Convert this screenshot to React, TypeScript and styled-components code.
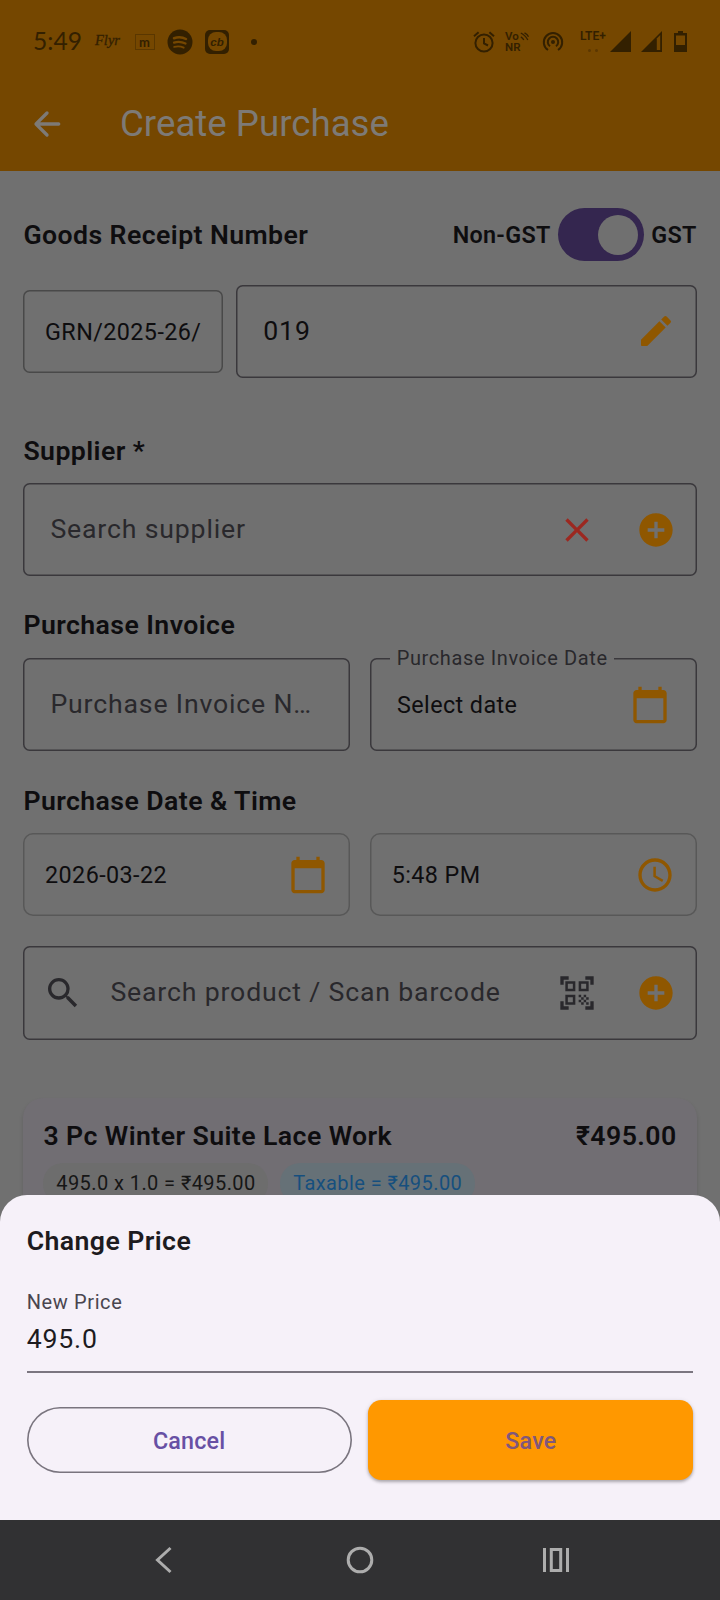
import React from "react";
import styled, { createGlobalStyle } from "styled-components";
import {
  MdAccessTime,
  MdAddCircle,
  MdCalendarToday,
  MdClose,
  MdQrCodeScanner,
  MdSearch,
} from "react-icons/md";

const c = {
  page: "#707070",
  bar: "#754700",
  barText: "#7d7a76",
  status: "#332000",
  text: "#0e0d0f",
  hint: "#29282c",
  outline: "#3a383c",
  orange: "#8f5700",
  red: "#9c2820",
  sheet: "#f6f1f9",
  purple: "#6750a4",
};

const Global = createGlobalStyle`
  * { box-sizing: border-box; }
  body { margin: 0; background: ${c.page}; font-family: Roboto, "Noto Sans", sans-serif; }
  svg { display: block; flex: none; }
  button { font: inherit; border: 0; background: none; padding: 0; }
`;

const Screen = styled.div`
  position: relative;
  width: 720px;
  height: 1600px;
  display: flex;
  flex-direction: column;
  overflow: hidden;
`;

const Header = styled.header`
  flex: none;
  height: 171px;
  background: ${c.bar};
`;

const StatusBar = styled.div`
  height: 83px;
  padding: 0 33px 0 33px;
  display: flex;
  align-items: center;
  justify-content: space-between;
  color: ${c.status};
`;

const StatusGroup = styled.div`
  display: flex;
  align-items: center;
`;

const Slot = styled.span<{ $ml: number }>`
  display: flex;
  margin-left: ${(p) => p.$ml}px;
`;

const Clock = styled.span`
  width: 50px;
  padding-bottom: 1px;
  font: 400 24.6px/30px Lato, sans-serif;
  white-space: nowrap;
`;

const Flyr = styled.span`
  margin-left: 12px;
  width: 26px;
  padding-bottom: 3px;
  font: italic 400 14.5px/20px "Liberation Serif", serif;
  -webkit-text-stroke: 0.3px ${c.status};
  white-space: nowrap;
`;

const MBox = styled.span`
  margin-left: 13.5px;
  width: 20px;
  height: 16px;
  border: 1px solid #5a3700;
  display: flex;
  align-items: center;
  justify-content: center;
  font: 700 13px/14px Lato, sans-serif;
`;

const CbBox = styled.span`
  margin-left: 12px;
  width: 24px;
  height: 24px;
  padding: 2.5px;
  border-radius: 5px;
  background: ${c.status};
`;

const CbInner = styled.span`
  display: flex;
  align-items: center;
  justify-content: center;
  width: 19px;
  height: 19px;
  border-radius: 8px;
  background: ${c.bar};
  font: italic 700 11.5px/14px "Liberation Sans", sans-serif;
`;

const Dot = styled.span`
  margin-left: 21.5px;
  width: 6px;
  height: 6px;
  border-radius: 50%;
  background: ${c.status};
`;

const Stack = styled.span<{ $ml: number; $w: number; $size: number }>`
  margin-left: ${(p) => p.$ml}px;
  width: ${(p) => p.$w}px;
  height: 22px;
  display: flex;
  flex-direction: column;
  font: 600 ${(p) => p.$size}px/11px Roboto, sans-serif;
  white-space: nowrap;
`;

const StackLine = styled.span`
  display: flex;
  align-items: center;
  gap: 1px;
`;

const FaintDots = styled.span`
  display: flex;
  gap: 4px;
  padding: 7px 0 0 8px;
  i {
    width: 3px;
    height: 3px;
    border-radius: 50%;
    background: #5c3700;
  }
`;

const AppBar = styled.div`
  height: 82px;
  padding-left: 27px;
  display: flex;
  align-items: center;
  color: ${c.barText};
`;

const AppTitle = styled.h1`
  margin: 0 0 0 53px;
  font-size: 36.67px;
  line-height: 46px;
  font-weight: 400;
  white-space: nowrap;
`;

const Form = styled.main`
  flex: 1;
  min-height: 0;
  overflow: hidden;
  padding: 37px 23.4px 0;
  color: ${c.text};
`;

const Row = styled.div<{ $gap?: number; $mt?: number; $between?: boolean }>`
  display: flex;
  align-items: center;
  gap: ${(p) => p.$gap ?? 0}px;
  margin-top: ${(p) => p.$mt ?? 0}px;
  justify-content: ${(p) => (p.$between ? "space-between" : "flex-start")};
`;

const SectionTitle = styled.h2<{ $mt?: number; $mb?: number }>`
  margin: ${(p) => p.$mt ?? 0}px 0 ${(p) => p.$mb ?? 0}px;
  font-size: 26.67px;
  line-height: 30px;
  font-weight: 600;
  letter-spacing: 0.42px;
  white-space: nowrap;
`;

const ToggleLabel = styled.span`
  font-size: 23.33px;
  line-height: 28px;
  font-weight: 600;
  letter-spacing: 0.3px;
`;

const Toggle = styled.span`
  width: 86.67px;
  height: 53.33px;
  border-radius: 27px;
  padding-right: 6.67px;
  display: flex;
  align-items: center;
  justify-content: flex-end;
  background: #34264f;
  &::after {
    content: "";
    width: 40px;
    height: 40px;
    border-radius: 50%;
    background: ${c.page};
  }
`;

const Field = styled.div<{ $w?: number; $tall?: boolean; $line?: string; $pl?: number; $r?: number }>`
  position: relative;
  ${(p) => (p.$w ? `flex: none; width: ${p.$w}px;` : "flex: 1; min-width: 0;")}
  height: ${(p) => (p.$tall === false ? 83.33 : 93.33)}px;
  padding-left: ${(p) => p.$pl ?? 27}px;
  border-radius: ${(p) => p.$r ?? 6.67}px;
  box-shadow: inset 0 0 0 1.5px ${(p) => p.$line ?? c.outline};
  display: flex;
  align-items: center;
`;

const Value = styled.span<{ $small?: boolean; $hint?: boolean }>`
  flex: 1;
  min-width: 0;
  padding: ${(p) => (p.$small ? "1px 0 0" : p.$hint ? "0 0 2px" : "0")};
  white-space: nowrap;
  font-size: ${(p) => (p.$small ? 23.33 : 26.67)}px;
  line-height: 34px;
  letter-spacing: ${(p) => (p.$small ? 0.42 : 0.83)}px;
  color: ${(p) => (p.$hint ? c.hint : c.text)};
`;

const IconSlot = styled.span<{ $w?: number; $pr?: number; $color?: string }>`
  flex: none;
  width: ${(p) => p.$w ?? 80}px;
  padding-right: ${(p) => p.$pr ?? 0}px;
  display: flex;
  justify-content: center;
  color: ${(p) => p.$color ?? c.orange};
`;

const FloatLabel = styled.span`
  position: absolute;
  left: 20px;
  top: -11.5px;
  padding: 0 6.67px;
  background: ${c.page};
  font-size: 20px;
  line-height: 24px;
  letter-spacing: 0.62px;
  color: ${c.hint};
  white-space: nowrap;
`;

const ItemCard = styled.section`
  margin-top: 58px;
  height: 260px;
  padding: 23px 20px 0;
  border-radius: 20px;
  background: #716e73;
  box-shadow: 0 3px 4px rgba(0, 0, 0, 0.14);
`;

const Chip = styled.span<{ $blue?: boolean }>`
  height: 41px;
  padding: 0 12.6px 0 12.9px;
  border-radius: 20px;
  background: ${(p) => (p.$blue ? "#667177" : "#6d6d6d")};
  color: ${(p) => (p.$blue ? "#164f7e" : "#161616")};
  font-size: 20px;
  line-height: 41px;
  letter-spacing: 0.42px;
  white-space: nowrap;
`;

const Sheet = styled.section`
  position: absolute;
  left: 0;
  right: 0;
  bottom: 80px;
  height: 325px;
  padding: 31px 26.67px 0;
  border-radius: 27px 27px 0 0;
  background: ${c.sheet};
  color: #1d1b20;
`;

const PriceField = styled.div`
  margin-top: 34px;
  height: 83px;
  border-bottom: 2px solid #7b7680;
`;

const PriceLabel = styled.div`
  font-size: 20px;
  line-height: 24px;
  letter-spacing: 0.62px;
  color: #49454f;
`;

const PriceValue = styled.div`
  margin-top: 9px;
  font-size: 26.67px;
  line-height: 32px;
  letter-spacing: 0.83px;
`;

const ActionButton = styled.button<{ $primary?: boolean }>`
  && {
    flex: 1;
    height: ${(p) => (p.$primary ? 80 : 66.67)}px;
    padding-top: 2.5px;
    border-radius: ${(p) => (p.$primary ? 13.33 : 34)}px;
    background: ${(p) => (p.$primary ? "#ff9800" : "transparent")};
    box-shadow: ${(p) =>
      p.$primary
        ? "0 2px 3px rgba(0,0,0,.24), 0 1px 5px rgba(0,0,0,.12)"
        : "inset 0 0 0 1.6px #79747e"};
    color: ${(p) => (p.$primary ? "#80577c" : c.purple)};
    font-size: 23.33px;
    line-height: 33px;
    font-weight: 500;
    letter-spacing: 0.17px;
  }
`;

const NavBar = styled.nav`
  flex: none;
  height: 80px;
  display: flex;
  align-items: center;
  justify-content: space-between;
  padding: 0 144px;
  background: #313133;
`;

const NavIcon = ({ children }: { children: React.ReactNode }) => (
  <svg width="40" height="40" viewBox="0 0 40 40" fill="none" stroke="#adadad" strokeWidth="3">
    {children}
  </svg>
);

const BackArrow = () => (
  <svg width="40" height="40" viewBox="0 0 24 24" fill="currentColor">
    <path d="M19 11H7.830l4.880-4.880c.39-.39.39-1.030 0-1.420a.996.996 0 0 0-1.410 0l-6.590 6.590a.996.996 0 0 0 0 1.410l6.590 6.590a.996.996 0 1 0 1.410-1.410L7.830 13H19c.55 0 1-.45 1-1s-.45-1-1-1z" />
  </svg>
);

const Pencil = () => (
  <svg width="40" height="40" viewBox="0 0 24 24" fill="currentColor">
    <path d="M3 17.460v3.040c0 .28.22.5.5.5h3.040c.13 0 .26-.05.35-.15L17.810 9.940l-3.750-3.750L3.150 17.100c-.1.1-.15.22-.15.36zM20.710 7.040a.996.996 0 0 0 0-1.410l-2.340-2.340a.996.996 0 0 0-1.410 0l-1.830 1.830 3.750 3.750 1.830-1.830z" />
  </svg>
);

export default function App() {
  return (
    <>
      <Global />
      <Screen>
        <Header>
          <StatusBar>
            <StatusGroup>
              <Clock>5:49</Clock>
              <Flyr>Flyr</Flyr>
              <MBox>m</MBox>
              <Slot $ml={12.5}>
                <svg width="26" height="26" viewBox="0 0 26 26">
                  <circle cx="13" cy="13" r="12.5" fill={c.status} />
                  <g fill="none" stroke={c.bar} strokeLinecap="round">
                    <path d="M7 9.2c4.500-1.500 8.500-1.100 12 .8" strokeWidth="2.500" />
                    <path d="M7 13.600c4-1.300 7.800-.9 11.500.9" strokeWidth="2.200" />
                    <path d="M7.200 17.900c3.600-1 6.500-.7 9.500.8" strokeWidth="1.900" />
                  </g>
                </svg>
              </Slot>
              <CbBox>
                <CbInner>cb</CbInner>
              </CbBox>
              <Dot />
            </StatusGroup>
            <StatusGroup>
              <svg width="22" height="22" viewBox="0 0 22 22" fill="none" stroke={c.status} strokeWidth="2">
                <circle cx="11" cy="12" r="8.600" />
                <path d="M11 7v5.500l4 2" />
                <path d="M1 5.300 5.600 1.300M21 5.300 16.400 1.300" />
              </svg>
              <Stack $ml={10} $w={24} $size={11.5}>
                <StackLine>
                  Vo
                  <svg width="9" height="9" viewBox="0 0 9 9" fill="none" stroke={c.status} strokeWidth="1.300">
                    <path d="M.8 1q4.500 2 7 7M4.500.8q3 1.500 4 4M.8 4.800q2 1 3 3.200" />
                  </svg>
                </StackLine>
                <StackLine>NR</StackLine>
              </Stack>
              <Slot $ml={13}>
                <svg width="22" height="22" viewBox="0 0 22 22" fill="none" stroke={c.status} strokeWidth="2">
                  <circle cx="11" cy="11" r="2" fill={c.status} stroke="none" />
                  <path d="M8 15.200a5.200 5.200 0 1 1 6 0" />
                  <path d="M6 19a9.200 9.200 0 1 1 10 0" />
                </svg>
              </Slot>
              <Stack $ml={16} $w={27} $size={12}>
                LTE+
                <FaintDots>
                  <i />
                  <i />
                </FaintDots>
              </Stack>
              <Slot $ml={3}>
                <svg width="21" height="21" viewBox="0 0 21 21">
                  <path d="M0 21 21 0V21Z" fill={c.status} />
                </svg>
              </Slot>
              <Slot $ml={10}>
                <svg width="21" height="21" viewBox="0 0 21 21">
                  <path d="M0 21 21 0V21Z" fill={c.status} />
                  <path d="M15.800 7.400 19.200 4V19h-3.400Z" fill={c.bar} />
                </svg>
              </Slot>
              <Slot $ml={12}>
                <svg width="13" height="21" viewBox="0 0 13 21">
                  <path
                    d="M4 0h5v2h4v19H0V2h4ZM2 4.500V14h9V4.500Z"
                    fill={c.status}
                    fillRule="evenodd"
                  />
                </svg>
              </Slot>
            </StatusGroup>
          </StatusBar>
          <AppBar>
            <BackArrow />
            <AppTitle>Create Purchase</AppTitle>
          </AppBar>
        </Header>

        <Form>
          <Row $between>
            <SectionTitle>Goods Receipt Number</SectionTitle>
            <Row $gap={7}>
              <ToggleLabel>Non-GST</ToggleLabel>
              <Toggle />
              <ToggleLabel>GST</ToggleLabel>
            </Row>
          </Row>

          <Row $gap={13.4} $mt={23.5}>
            <Field $w={199.5} $tall={false} $pl={21.67} $line="#494949">
              <Value $small>GRN/2025-26/</Value>
            </Field>
            <Field>
              <Value>019</Value>
              <IconSlot $pr={1}>
                <Pencil />
              </IconSlot>
            </Field>
          </Row>

          <SectionTitle $mt={57.8} $mb={17}>
            Supplier *
          </SectionTitle>
          <Row>
            <Field>
              <Value $hint>Search supplier</Value>
              <IconSlot $color={c.red}>
                <MdClose size={40} />
              </IconSlot>
              <IconSlot $pr={0.6}>
                <MdAddCircle size={40} />
              </IconSlot>
            </Field>
          </Row>

          <SectionTitle $mt={34} $mb={17.7}>
            Purchase Invoice
          </SectionTitle>
          <Row $gap={20}>
            <Field>
              <Value $hint>Purchase Invoice N…</Value>
            </Field>
            <Field>
              <FloatLabel>Purchase Invoice Date</FloatLabel>
              <Value $small>Select date</Value>
              <IconSlot $w={93.3}>
                <MdCalendarToday size={40} />
              </IconSlot>
            </Field>
          </Row>

          <SectionTitle $mt={34.7} $mb={17}>
            Purchase Date &amp; Time
          </SectionTitle>
          <Row $gap={20}>
            <Field $tall={false} $pl={21.67} $line="#585858" $r={10}>
              <Value $small>2026-03-22</Value>
              <IconSlot $w={83.3}>
                <MdCalendarToday size={40} />
              </IconSlot>
            </Field>
            <Field $tall={false} $pl={21.67} $line="#585858" $r={10}>
              <Value $small>5:48 PM</Value>
              <IconSlot $w={83.3}>
                <MdAccessTime size={40} />
              </IconSlot>
            </Field>
          </Row>

          <Row $mt={30}>
            <Field $pl={0}>
              <IconSlot $w={87} $pr={8} $color={c.hint}>
                <MdSearch size={40} />
              </IconSlot>
              <Value $hint>Search product / Scan barcode</Value>
              <IconSlot $color={c.hint}>
                <MdQrCodeScanner size={40} />
              </IconSlot>
              <IconSlot $pr={0.6}>
                <MdAddCircle size={40} />
              </IconSlot>
            </Field>
          </Row>

          <ItemCard>
            <Row $between>
              <SectionTitle>3 Pc Winter Suite Lace Work</SectionTitle>
              <SectionTitle>₹495.00</SectionTitle>
            </Row>
            <Row $gap={12} $mt={12}>
              <Chip>495.0 x 1.0 = ₹495.00</Chip>
              <Chip $blue>Taxable = ₹495.00</Chip>
            </Row>
          </ItemCard>
        </Form>

        <Sheet>
          <SectionTitle>Change Price</SectionTitle>
          <PriceField>
            <PriceLabel>New Price</PriceLabel>
            <PriceValue>495.0</PriceValue>
          </PriceField>
          <Row $gap={16.67} $mt={27}>
            <ActionButton>Cancel</ActionButton>
            <ActionButton $primary>Save</ActionButton>
          </Row>
        </Sheet>

        <NavBar>
          <NavIcon>
            <path d="M26.500 8 13.500 20 26.500 32" />
          </NavIcon>
          <NavIcon>
            <circle cx="20" cy="20" r="11.800" />
          </NavIcon>
          <NavIcon>
            <path d="M8.500 8v24M31.500 8v24M15.300 9.500h9.400v21H15.300Z" />
          </NavIcon>
        </NavBar>
      </Screen>
    </>
  );
}
